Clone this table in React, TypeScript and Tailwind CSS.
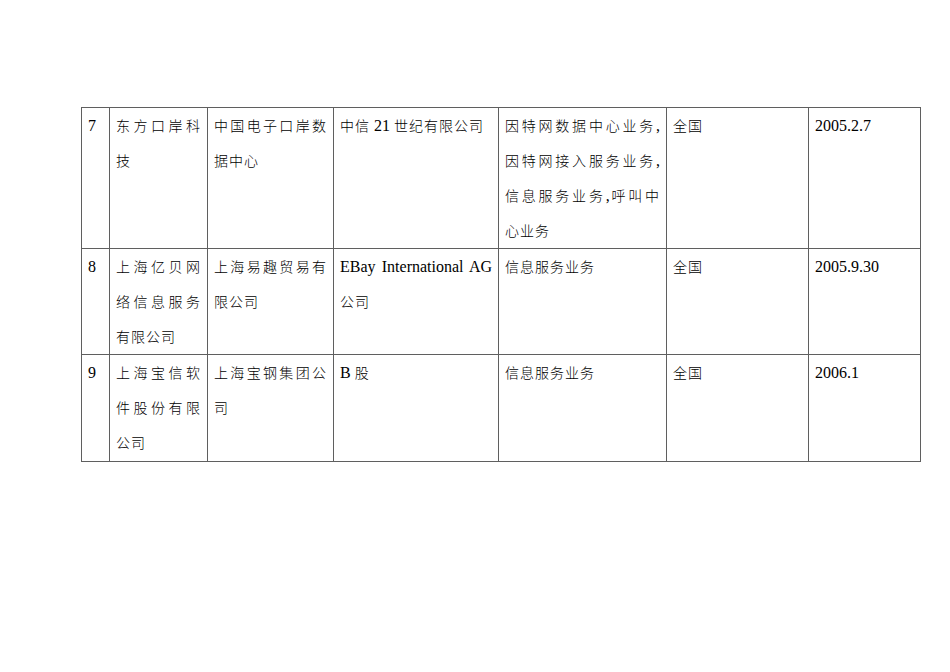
import React from "react";

const CJK = "font-['Noto_Sans_CJK_SC',sans-serif] font-light text-[14px] tracking-[1px]";

function Z({ children }: { children: React.ReactNode }) {
  return <span className={CJK}>{children}</span>;
}

function L({ children, j }: { children: React.ReactNode; j?: boolean }) {
  return (
    <div className={j ? "text-justify [text-align-last:justify] whitespace-nowrap" : "whitespace-nowrap"}>
      {children}
    </div>
  );
}

function Cell({ w, children }: { w: string; children?: React.ReactNode }) {
  return <div className={`${w} shrink-0 border-r border-[#5f5f5f] px-[6px] overflow-hidden`}>{children}</div>;
}

export default function App() {
  return (
    <div className="w-[950px] h-[672px] bg-white text-black">
      <div className="pt-[107px] pl-[81px]">
        <div
          className="w-[840px] border-t border-l border-[#5f5f5f] font-['Liberation_Serif','Noto_Sans_CJK_SC',serif] text-[16px] leading-[35px]"
        >
          {/* Row 7 */}
          <div className="flex h-[141px] border-b border-[#5f5f5f]">
            <Cell w="w-[28px]">
              <L>7</L>
            </Cell>
            <Cell w="w-[98px]">
              <L j><Z>东方口岸科</Z></L>
              <L><Z>技</Z></L>
            </Cell>
            <Cell w="w-[126px]">
              <L j><Z>中国电子口岸数</Z></L>
              <L><Z>据中心</Z></L>
            </Cell>
            <Cell w="w-[165px]">
              <L><Z>中信</Z> 21 <Z>世纪有限公司</Z></L>
            </Cell>
            <Cell w="w-[168px]">
              <L j><Z>因特网数据中心业务</Z>,</L>
              <L j><Z>因特网接入服务业务</Z>,</L>
              <L j><Z>信息服务业务</Z>,<Z>呼叫中</Z></L>
              <L><Z>心业务</Z></L>
            </Cell>
            <Cell w="w-[142px]">
              <L><Z>全国</Z></L>
            </Cell>
            <Cell w="w-[112px]">
              <L>2005.2.7</L>
            </Cell>
          </div>
          {/* Row 8 */}
          <div className="flex h-[106px] border-b border-[#5f5f5f]">
            <Cell w="w-[28px]">
              <L>8</L>
            </Cell>
            <Cell w="w-[98px]">
              <L j><Z>上海亿贝网</Z></L>
              <L j><Z>络信息服务</Z></L>
              <L><Z>有限公司</Z></L>
            </Cell>
            <Cell w="w-[126px]">
              <L j><Z>上海易趣贸易有</Z></L>
              <L><Z>限公司</Z></L>
            </Cell>
            <Cell w="w-[165px]">
              <L j>EBay International AG</L>
              <L><Z>公司</Z></L>
            </Cell>
            <Cell w="w-[168px]">
              <L><Z>信息服务业务</Z></L>
            </Cell>
            <Cell w="w-[142px]">
              <L><Z>全国</Z></L>
            </Cell>
            <Cell w="w-[112px]">
              <L>2005.9.30</L>
            </Cell>
          </div>
          {/* Row 9 */}
          <div className="flex h-[107px] border-b border-[#5f5f5f]">
            <Cell w="w-[28px]">
              <L>9</L>
            </Cell>
            <Cell w="w-[98px]">
              <L j><Z>上海宝信软</Z></L>
              <L j><Z>件股份有限</Z></L>
              <L><Z>公司</Z></L>
            </Cell>
            <Cell w="w-[126px]">
              <L j><Z>上海宝钢集团公</Z></L>
              <L><Z>司</Z></L>
            </Cell>
            <Cell w="w-[165px]">
              <L>B <Z>股</Z></L>
            </Cell>
            <Cell w="w-[168px]">
              <L><Z>信息服务业务</Z></L>
            </Cell>
            <Cell w="w-[142px]">
              <L><Z>全国</Z></L>
            </Cell>
            <Cell w="w-[112px]">
              <L>2006.1</L>
            </Cell>
          </div>
        </div>
      </div>
    </div>
  );
}
